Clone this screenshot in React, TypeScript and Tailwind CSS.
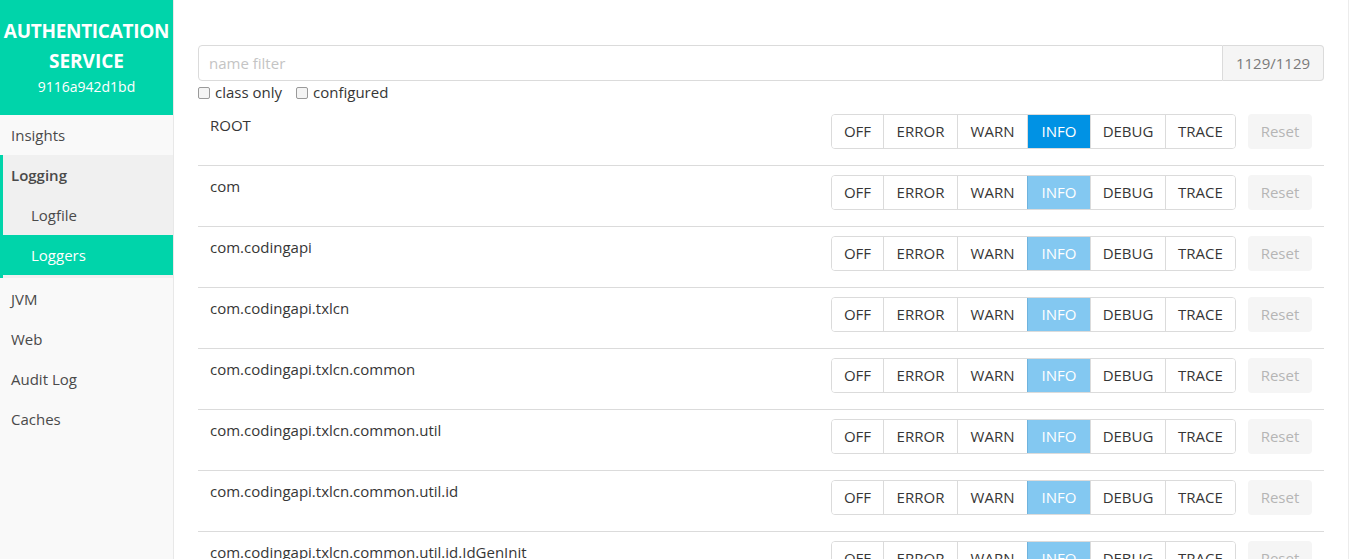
import { useState } from "react";

const levels = ["OFF", "ERROR", "WARN", "INFO", "DEBUG", "TRACE"];

const loggers = [
  { name: "ROOT", configured: true },
  { name: "com", configured: false },
  { name: "com.codingapi", configured: false },
  { name: "com.codingapi.txlcn", configured: false },
  { name: "com.codingapi.txlcn.common", configured: false },
  { name: "com.codingapi.txlcn.common.util", configured: false },
  { name: "com.codingapi.txlcn.common.util.id", configured: false },
  { name: "com.codingapi.txlcn.common.util.id.IdGenInit", configured: false },
];

const levelWidths: Record<string, string> = {
  OFF: "w-[51px]",
  ERROR: "w-[74px]",
  WARN: "w-[70px]",
  INFO: "w-[63px]",
  DEBUG: "w-[75px]",
  TRACE: "w-[70px]",
};

const LevelGroup = ({ configured }: { configured: boolean }) => (
  <div className="flex h-[35px] rounded-[4px] border border-[#dbdbdb] overflow-hidden">
    {levels.map((l, i) => {
      const active = l === "INFO";
      return (
        <div
          key={l}
          className={`${levelWidths[l]} flex items-center justify-center text-[15px] ${i > 0 ? "border-l border-[#dbdbdb]" : ""} ${
            active
              ? configured
                ? "bg-[#0092e4] text-white"
                : "bg-[#83c8f1] text-white border-l-[#6fb3dd]"
              : "bg-white text-[#363636]"
          }`}
        >
          {l}
        </div>
      );
    })}
  </div>
);

const App = () => {
  const [filter, setFilter] = useState("");

  return (
    <div className="flex h-[559px] overflow-hidden bg-white text-[#363636]" style={{ fontFamily: '"Open Sans", "Noto Sans", sans-serif' }}>
      {/* Sidebar */}
      <aside className="w-[174px] shrink-0 bg-[#f9f9f9] border-r border-[#e8e8e8]">
        <div className="h-[115px] bg-[#00d4aa] text-white flex flex-col items-center pt-[16px] text-center">
          <div className="text-[19px] font-bold leading-[30px] tracking-[-0.3px] whitespace-nowrap">AUTHENTICATION</div>
          <div className="text-[19px] font-bold leading-[30px]">SERVICE</div>
          <div className="text-[14px] leading-[22px]">9116a942d1bd</div>
        </div>
        <nav className="text-[15px] text-[#4a4a4a]">
          <div className="h-10 flex items-center px-[11px]">Insights</div>
          <div className="bg-[#f0f0f0] border-l-[3px] border-[#00d4aa] pb-[3px]">
            <div className="h-10 flex items-center px-[8px] font-semibold">Logging</div>
            <div className="h-10 flex items-center pl-[28px]">Logfile</div>
            <div className="h-10 flex items-center pl-[28px] bg-[#00d4aa] text-white">Loggers</div>
          </div>
          <div className="h-10 flex items-center px-[11px] mt-px">JVM</div>
          <div className="h-10 flex items-center px-[11px]">Web</div>
          <div className="h-10 flex items-center px-[11px]">Audit Log</div>
          <div className="h-10 flex items-center px-[11px]">Caches</div>
        </nav>
      </aside>

      {/* Main */}
      <main className="flex-1 border-r border-[#ececec] px-6 pt-[45px]">
        <div className="flex h-[36px]">
          <input
            value={filter}
            onChange={(e) => setFilter(e.target.value)}
            placeholder="name filter"
            className="flex-1 border border-[#dbdbdb] rounded-l-[4px] px-[10px] text-[15px] placeholder:text-[#c4c4c4] outline-none"
          />
          <div className="w-[101px] flex items-center justify-center bg-[#f5f5f5] border border-l-0 border-[#dbdbdb] rounded-r-[4px] text-[15px] text-[#7a7a7a]">
            1129/1129
          </div>
        </div>
        <div className="flex items-center gap-[7px] text-[15px] h-[23px]">
          <label className="flex items-center gap-[5px]">
            <span className="w-[12px] h-[12px] border border-[#9a9a9a] rounded-[2px] bg-[#f4f4f4]" />
            class only
          </label>
          <label className="flex items-center gap-[5px] ml-[7px]">
            <span className="w-[12px] h-[12px] border border-[#9a9a9a] rounded-[2px] bg-[#f4f4f4]" />
            configured
          </label>
        </div>
        <div>
          {loggers.map((lg, i) => (
            <div
              key={lg.name}
              className={`flex justify-between h-[61px] px-3 ${i > 0 ? "border-t border-[#dbdbdb] pt-[9px]" : "pt-[10px] h-[60px]"}`}
            >
              <div className="text-[15px] leading-[20px] pt-px">{lg.name}</div>
              <div className="flex gap-3 items-start">
                <LevelGroup configured={lg.configured} />
                <div className="w-[64px] h-[35px] rounded-[4px] bg-[#f5f5f5] text-[#b5b5b5] text-[15px] flex items-center justify-center">
                  Reset
                </div>
              </div>
            </div>
          ))}
        </div>
      </main>
    </div>
  );
};

export default App;
